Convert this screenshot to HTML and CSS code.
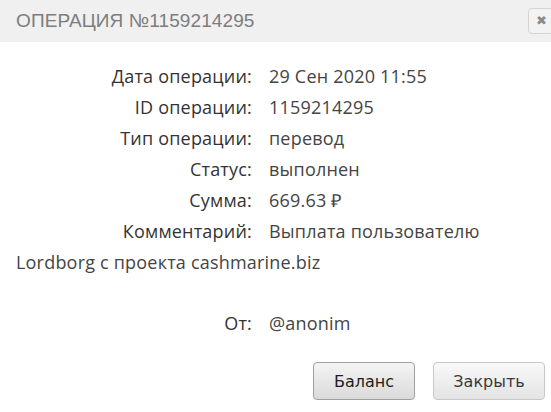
FILE: index.html
```html
<!DOCTYPE html>
<html lang="ru">
<head>
    <meta charset="UTF-8">
    <title>Операция №1159214295</title>
    <link rel="stylesheet" href="styles.css">
</head>
<body>
    <div class="dialog">
        <div class="dialog-head">
            <h2>Операция №1159214295</h2>
            <button class="close-btn">&#10006;</button>
        </div>

        <div class="details">
            <div class="row"><span class="label">Дата операции:</span>29 Сен 2020 11:55</div>
            <div class="row"><span class="label">ID операции:</span>1159214295</div>
            <div class="row"><span class="label">Тип операции:</span>перевод</div>
            <div class="row"><span class="label">Статус:</span>выполнен</div>
            <div class="row"><span class="label">Сумма:</span>669.63 &#8381;</div>
            <div class="row"><span class="label">Комментарий:</span>Выплата пользователю Lordborg с проекта cashmarine.biz</div>
            <div class="row spaced"><span class="label">От:</span>@anonim</div>
        </div>

        <div class="actions">
            <button class="btn btn-main">Баланс</button>
            <button class="btn">Закрыть</button>
        </div>
    </div>
</body>
</html>
```

FILE: styles.css
```css
body {
    margin: 0;
    background: #fff;
    font-family: "Open Sans", sans-serif;
}
.dialog {
    width: 551px;
    height: 412px;
    overflow: hidden;
}
.dialog-head {
    height: 42px;
    background: #f0f0f0;
    display: flex;
    align-items: center;
    justify-content: space-between;
    padding-left: 16px;
}
.dialog-head h2 {
    margin: 0;
    font-family: "Liberation Sans", sans-serif;
    font-weight: normal;
    font-size: 19px;
    letter-spacing: 0.1px;
    text-transform: uppercase;
    color: #7d7d7d;
}
.close-btn {
    width: 26px;
    height: 26px;
    margin-right: -3px;
    margin-top: -1px;
    padding: 0;
    border: 1px solid #d4d4d4;
    border-radius: 4px;
    background: #f3f3f3;
    color: #8a8a8a;
    font-size: 13px;
    line-height: 24px;
}
.details {
    padding: 19px 16px 0 16px;
    font-size: 18px;
    letter-spacing: 0.2px;
    line-height: 31px;
    color: #444;
}
.label {
    display: inline-block;
    width: 236px;
    margin-right: 17px;
    text-align: right;
    color: #333;
}
.spaced {
    margin-top: 30px;
}
.actions {
    display: flex;
    justify-content: flex-end;
    gap: 18px;
    padding: 23px 6px 0 0;
}
.btn {
    height: 38px;
    padding: 0 16px;
    border: 1px solid #c8c8c8;
    border-radius: 4px;
    background: linear-gradient(#f8f8f8, #e4e4e4);
    font-family: "DejaVu Sans", sans-serif;
    font-size: 16px;
    color: #3a3a3a;
}
.btn-main {
    width: 102px;
    border-color: #a0a0a0;
    background: linear-gradient(#f4f4f4, #dadada);
    color: #1e1e1e;
}
.btn:last-child {
    width: 112px;
}
```
